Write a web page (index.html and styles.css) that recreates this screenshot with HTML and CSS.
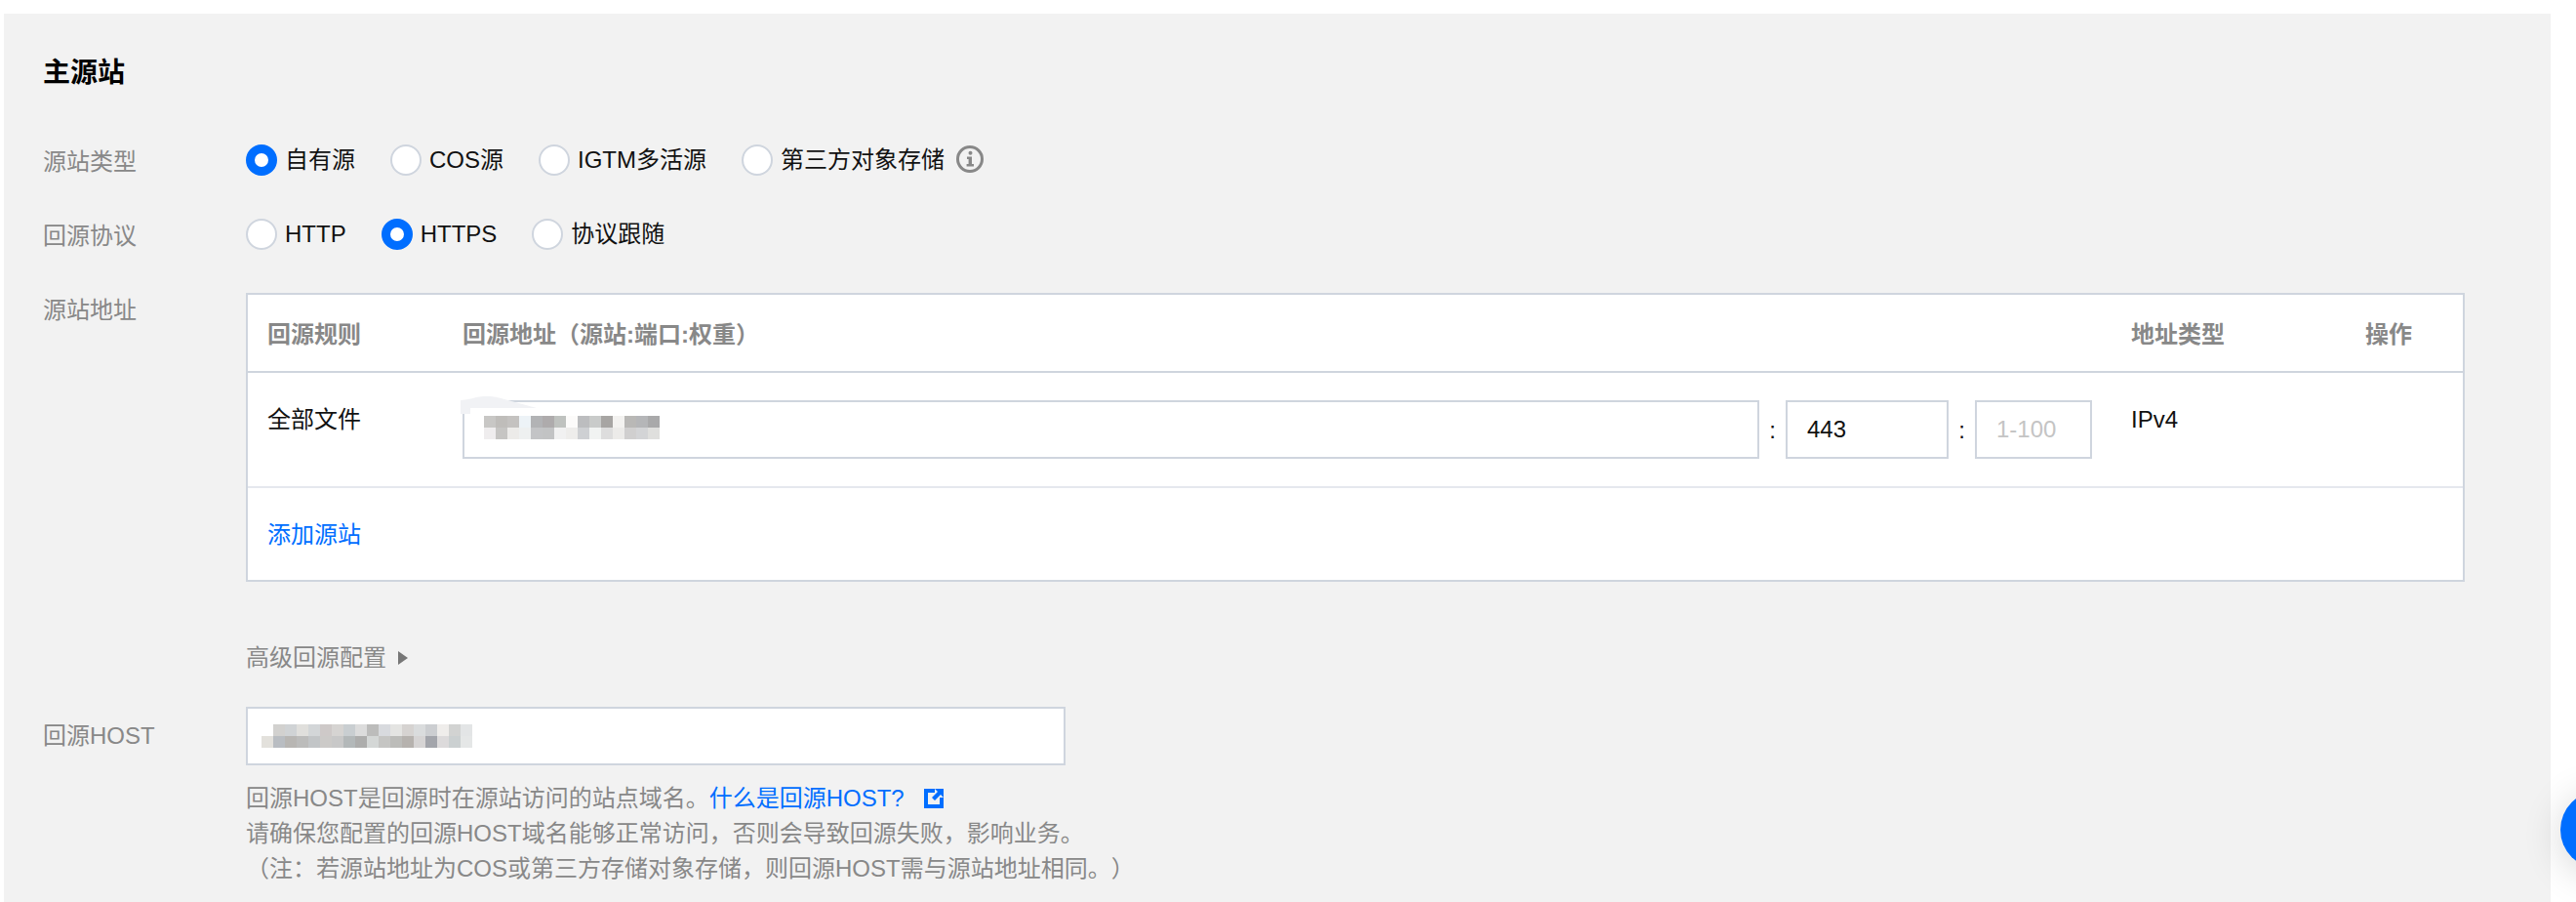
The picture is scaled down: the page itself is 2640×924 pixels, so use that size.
FILE: index.html
```html
<!DOCTYPE html>
<html lang="zh-CN">
<head>
<meta charset="utf-8">
<title>主源站</title>
<link rel="stylesheet" href="styles.css">
</head>
<body>
<main class="panel">
  <h2 class="title">主源站</h2>

  <div class="form-row">
    <div class="form-label">源站类型</div>
    <div class="radio-group">
      <label class="radio is-on"><i></i><span>自有源</span></label>
      <label class="radio"><i></i><span>COS源</span></label>
      <label class="radio"><i></i><span>IGTM多活源</span></label>
      <label class="radio radio-last"><i></i><span>第三方对象存储</span></label>
      <svg class="info" viewBox="0 0 28 28" aria-hidden="true">
        <circle cx="14" cy="14" r="12.5" fill="none" stroke="#888" stroke-width="3"/>
        <circle cx="14.5" cy="7.8" r="2" fill="#888"/>
        <path d="M11 11.5h5v7.5h2v2.4h-7.4V19h2v-5.1H11z" fill="#888"/>
      </svg>
    </div>
  </div>

  <div class="form-row">
    <div class="form-label">回源协议</div>
    <div class="radio-group">
      <label class="radio"><i></i><span>HTTP</span></label>
      <label class="radio is-on"><i></i><span>HTTPS</span></label>
      <label class="radio"><i></i><span>协议跟随</span></label>
    </div>
  </div>

  <div class="form-row form-row-table">
    <div class="form-label">源站地址</div>
    <div class="origin-table">
      <div class="tr th">
        <div>回源规则</div>
        <div>回源地址（源站:端口:权重）</div>
        <div>地址类型</div>
        <div>操作</div>
      </div>
      <div class="tr td">
        <div class="cell-text">全部文件</div>
        <div class="addr">
          <div class="field field-addr">
            <svg class="smudge" viewBox="0 0 78 18" aria-hidden="true"><path d="M0 4Q10 3 16 1Q30-2 45 3L78 12H10V18H0Z" fill="#f1f2f5"/></svg>
            <svg class="mosaic" viewBox="0 0 180 24" aria-hidden="true" shape-rendering="crispEdges">
              <rect x="0" width="12" height="12" fill="#c8c7c5"/><rect x="12" width="12" height="12" fill="#bfbdba"/><rect x="24" width="12" height="12" fill="#c4c2c0"/><rect x="36" width="12" height="12" fill="#edf3f7"/><rect x="48" width="12" height="12" fill="#b2b3b5"/><rect x="60" width="12" height="12" fill="#aeabac"/><rect x="72" width="12" height="12" fill="#bfc2bf"/><rect x="84" width="12" height="12" fill="#fcfbfa"/><rect x="96" width="12" height="12" fill="#bcbdbf"/><rect x="108" width="12" height="12" fill="#c9cbca"/><rect x="120" width="12" height="12" fill="#a7a5a3"/><rect x="132" width="12" height="12" fill="#f3f2f0"/><rect x="144" width="12" height="12" fill="#b9b8b6"/><rect x="156" width="12" height="12" fill="#b5b6b8"/><rect x="168" width="12" height="12" fill="#a9a9aa"/>
              <rect x="0" y="12" width="12" height="12" fill="#efedee"/><rect x="12" y="12" width="12" height="12" fill="#c6c5c3"/><rect x="24" y="12" width="12" height="12" fill="#ecebe9"/><rect x="36" y="12" width="12" height="12" fill="#eef0f0"/><rect x="48" y="12" width="12" height="12" fill="#c3c4c6"/><rect x="60" y="12" width="12" height="12" fill="#c2c3c4"/><rect x="72" y="12" width="12" height="12" fill="#f1f1f1"/><rect x="84" y="12" width="12" height="12" fill="#eeedeb"/><rect x="96" y="12" width="12" height="12" fill="#ced0d3"/><rect x="108" y="12" width="12" height="12" fill="#f1f3f2"/><rect x="120" y="12" width="12" height="12" fill="#dddddd"/><rect x="132" y="12" width="12" height="12" fill="#ecebe9"/><rect x="144" y="12" width="12" height="12" fill="#d0cfcf"/><rect x="156" y="12" width="12" height="12" fill="#d3d4d6"/><rect x="168" y="12" width="12" height="12" fill="#dfdfdd"/>
            </svg>
          </div>
          <span class="colon">:</span>
          <div class="field field-port">443</div>
          <span class="colon">:</span>
          <div class="field field-weight">1-100</div>
        </div>
        <div class="cell-text">IPv4</div>
        <div></div>
      </div>
      <div class="tr tf"><a class="link">添加源站</a></div>
    </div>
  </div>

  <div class="advanced">高级回源配置<i class="caret"></i></div>

  <div class="form-row form-row-host">
    <div class="form-label">回源HOST</div>
    <div class="host-body">
      <div class="field field-host">
        <svg class="mosaic mosaic-host" viewBox="0 0 216 24" aria-hidden="true" shape-rendering="crispEdges">
          <rect x="12" width="12" height="12" fill="#d2d1cf"/><rect x="24" width="12" height="12" fill="#d0d3d5"/><rect x="36" width="12" height="12" fill="#e0dfdc"/><rect x="48" width="12" height="12" fill="#d3d6d8"/><rect x="60" width="12" height="12" fill="#cec9c8"/><rect x="72" width="12" height="12" fill="#d6d4d2"/><rect x="84" width="12" height="12" fill="#c9ced1"/><rect x="96" width="12" height="12" fill="#dcdcdc"/><rect x="108" width="12" height="12" fill="#bcbcbb"/><rect x="120" width="12" height="12" fill="#d8dade"/><rect x="132" width="12" height="12" fill="#e4e4e2"/><rect x="144" width="12" height="12" fill="#d6d3d1"/><rect x="156" width="12" height="12" fill="#dadcdd"/><rect x="168" width="12" height="12" fill="#ccced1"/><rect x="180" width="12" height="12" fill="#efedeb"/><rect x="192" width="12" height="12" fill="#d2d3d2"/><rect x="204" width="12" height="12" fill="#e3e5e6"/>
          <rect x="0" y="12" width="12" height="12" fill="#e3e1dc"/><rect x="12" y="12" width="12" height="12" fill="#b9bdc2"/><rect x="24" y="12" width="12" height="12" fill="#b8b6b3"/><rect x="36" y="12" width="12" height="12" fill="#bcbcbb"/><rect x="48" y="12" width="12" height="12" fill="#c2c5c7"/><rect x="60" y="12" width="12" height="12" fill="#cccac8"/><rect x="72" y="12" width="12" height="12" fill="#c8c8c8"/><rect x="84" y="12" width="12" height="12" fill="#b3b8b9"/><rect x="96" y="12" width="12" height="12" fill="#adadac"/><rect x="108" y="12" width="12" height="12" fill="#d4d7d6"/><rect x="120" y="12" width="12" height="12" fill="#c5c5c3"/><rect x="132" y="12" width="12" height="12" fill="#bcbcb9"/><rect x="144" y="12" width="12" height="12" fill="#b6b2ae"/><rect x="156" y="12" width="12" height="12" fill="#d6d4d4"/><rect x="168" y="12" width="12" height="12" fill="#a3a5ab"/><rect x="180" y="12" width="12" height="12" fill="#dcdadb"/><rect x="192" y="12" width="12" height="12" fill="#cbd0d1"/><rect x="204" y="12" width="12" height="12" fill="#e5e7e7"/>
        </svg>
      </div>
      <div class="help">
        <p>回源HOST是回源时在源站访问的站点域名。<a class="link">什么是回源HOST?</a><svg class="ext" viewBox="0 0 20 20" aria-hidden="true"><path d="M0 0H11V4H4V16H16V9H20V20H0Z" fill="#006eff"/><path d="M11 0H20V9L17 6L11 12L8 9L14 3Z" fill="#006eff"/></svg></p>
        <p>请确保您配置的回源HOST域名能够正常访问，否则会导致回源失败，影响业务。</p>
        <p>（注：若源站地址为COS或第三方存储对象存储，则回源HOST需与源站地址相同。）</p>
      </div>
    </div>
  </div>
</main>
<div class="float-btn"></div>
</body>
</html>
```

FILE: styles.css
```css
* { box-sizing: border-box; }

html, body {
  margin: 0;
  height: 924px;
  overflow: hidden;
  background: #fff;
}

body {
  font-family: "Liberation Sans", "Noto Sans CJK SC", sans-serif;
  font-size: 24px;
  color: #111;
  text-spacing-trim: space-all;
}

.panel {
  margin: 14px 26px 0 4px;
  height: 910px;
  padding: 41px 0 0 40px;
  background: #f2f2f2;
}

.title {
  margin: 0 0 53px;
  font-size: 28px;
  line-height: 40px;
  font-weight: 700;
  color: #000;
}

.form-row {
  display: grid;
  grid-template-columns: 208px 1fr;
  min-height: 32px;
  margin-bottom: 44px;
}

.form-label {
  height: 32px;
  color: #888;
  line-height: 36px;
}

.radio-group {
  display: flex;
  align-items: center;
  height: 32px;
  gap: 36px;
}

.radio {
  display: flex;
  align-items: center;
  gap: 8px;
  line-height: 32px;
}

.radio i {
  flex: none;
  width: 32px;
  height: 32px;
  border: 2px solid #cfd5de;
  border-radius: 50%;
  background: #fff;
}

.radio.is-on i {
  border: 9px solid #006eff;
}

.radio-last { margin-right: -24px; }

.info {
  flex: none;
  width: 28px;
  height: 28px;
  margin-top: -2px;
}

.origin-table {
  width: 2274px;
  height: 296px;
  border: 2px solid #cfd5de;
  background: #fff;
}

.tr {
  display: grid;
  grid-template-columns: 200px 1710px 240px 1fr;
  padding-left: 20px;
}

.th {
  height: 80px;
  padding-bottom: 2px;
  align-items: center;
  border-bottom: 2px solid #cfd5de;
  color: #888;
  font-weight: 700;
}

.td {
  height: 118px;
  padding-top: 28px;
  border-bottom: 2px solid #e5e8ee;
}

.cell-text { line-height: 40px; }

.tf {
  display: flex;
  align-items: center;
  height: 94px;
  padding-bottom: 3px;
}

.link { color: #006eff; }

.addr {
  display: flex;
  width: 1670px;
  height: 60px;
}

.colon {
  flex: none;
  width: 27px;
  line-height: 62px;
  text-align: center;
}

.field {
  position: relative;
  display: flex;
  align-items: center;
  height: 60px;
  border: 2px solid #cfd5de;
  background: #fff;
}

.field-addr { flex: 1; padding-left: 20px; }
.field-port { flex: none; width: 167px; padding-left: 20px; }
.field-weight { flex: none; width: 120px; padding-left: 20px; color: #c4c4c4; }
.field-host { width: 840px; padding-left: 14px; }

.mosaic {
  display: block;
  width: 180px;
  height: 24px;
  margin-bottom: 4px;
}

.mosaic-host {
  width: 216px;
  margin-bottom: 0;
}

.smudge {
  position: absolute;
  left: -4px;
  top: -6px;
  width: 78px;
  height: 18px;
}

.advanced {
  display: flex;
  align-items: center;
  height: 30px;
  margin: 60px 0 38px 208px;
  color: #888;
}

.caret {
  width: 0;
  height: 0;
  margin-top: 6px;
  margin-left: 12px;
  border-style: solid;
  border-width: 7px 0 7px 10px;
  border-color: transparent transparent transparent #777;
}

.form-row-host .form-label { height: 60px; line-height: 60px; }

.help {
  margin-top: 16px;
  color: #888;
  line-height: 36px;
}

.help p { margin: 0; }

.ext {
  width: 20px;
  height: 20px;
  margin-left: 20px;
  vertical-align: -2px;
}

.float-btn {
  position: fixed;
  left: 2624px;
  top: 810px;
  width: 80px;
  height: 80px;
  border-radius: 50%;
  background: #006eff;
  box-shadow: 0 6px 40px rgba(0, 0, 0, .16);
}
```
